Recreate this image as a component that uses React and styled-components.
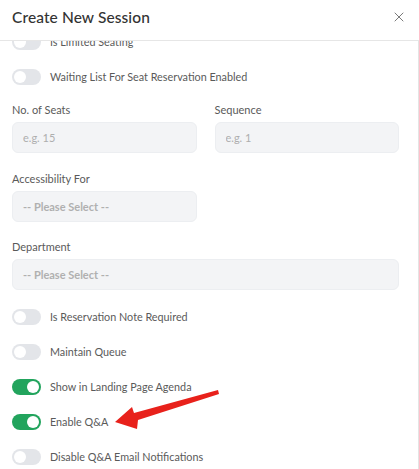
import React, { useLayoutEffect, useRef } from 'react';
import styled, { createGlobalStyle } from 'styled-components';
import { X } from 'lucide-react';

const GlobalStyle = createGlobalStyle`
  html, body {
    margin: 0;
    padding: 0;
    background: #fff;
  }
  body {
    font-family: Lato, "Noto Sans", sans-serif;
    color: #555;
  }
  * { box-sizing: border-box; }
`;

const Modal = styled.div`
  position: relative;
  width: 419px;
  height: 469px;
  display: flex;
  flex-direction: column;
  background: #fff;
  overflow: hidden;
`;

const Header = styled.div`
  height: 41px;
  flex: none;
  display: flex;
  align-items: center;
  justify-content: space-between;
  padding: 0 12px 6px 12px;
  border-bottom: 1px solid #e6e6e6;
`;

const Title = styled.h2`
  margin: 0;
  font-size: 15.5px;
  font-weight: 500;
  color: #333;
  letter-spacing: 0.1px;
`;

const CloseButton = styled.button`
  border: none;
  background: none;
  padding: 0;
  display: flex;
  color: #7a7a7a;
  cursor: pointer;
`;

const Body = styled.div`
  flex: 1;
  overflow: hidden;
  padding: 16px 19px 0 12px;
  border-right: 1px solid #e4e4e4;
`;

const SwitchRow = styled.label`
  height: 35px;
  display: flex;
  align-items: center;
  gap: 9px;
  font-size: 10.8px;
  color: #5a5a5a;
`;

const Track = styled.span`
  width: 29px;
  height: 16px;
  border-radius: 8px;
  flex: none;
  display: flex;
  align-items: center;
  padding: 0 2px;
  justify-content: ${p => (p.$on ? 'flex-end' : 'flex-start')};
  background: ${p => (p.$on ? '#22a45d' : '#e3e5e9')};
`;

const Knob = styled.span`
  width: 12px;
  height: 12px;
  border-radius: 50%;
  background: #fff;
`;

const Fields = styled.div`
  display: grid;
  grid-template-columns: 1fr 1fr;
  column-gap: 18px;
  row-gap: 17.5px;
  margin: 8px 0 9px;
`;

const Field = styled.div`
  display: flex;
  flex-direction: column;
  gap: 5px;
  grid-column: ${p => (p.$wide ? '1 / span 2' : 'auto')};
`;

const Label = styled.span`
  font-size: 11px;
  line-height: 15px;
  color: #5a5a5a;
`;

const Input = styled.input`
  height: 31px;
  width: 100%;
  border: 1px solid #eceef1;
  border-radius: 6px;
  background: #f3f4f6;
  padding: 0 10px;
  font-family: inherit;
  font-size: 11px;
  color: #333;
  outline: none;
  &::placeholder { color: #aeaeae; }
`;

const Select = styled.div`
  height: 31px;
  width: 100%;
  border: 1px solid #eceef1;
  border-radius: 6px;
  background: #f3f4f6;
  padding: 0 10px;
  display: flex;
  align-items: center;
  font-size: 11px;
  font-weight: 700;
  color: #b0b0b0;
`;

const Annotation = styled.svg`
  position: absolute;
  left: 0;
  top: 0;
  pointer-events: none;
`;

const Switch = ({ on, children }) => (
  <SwitchRow>
    <Track $on={on}><Knob /></Track>
    {children}
  </SwitchRow>
);

const topSwitches = [
  { label: 'Is Limited Seating', on: false },
  { label: 'Waiting List For Seat Reservation Enabled', on: false },
];

const bottomSwitches = [
  { label: 'Is Reservation Note Required', on: false },
  { label: 'Maintain Queue', on: false },
  { label: 'Show in Landing Page Agenda', on: true },
  { label: 'Enable Q&A', on: true },
  { label: 'Disable Q&A Email Notifications', on: false },
];

export default function App() {
  const bodyRef = useRef(null);

  // the form is scrolled a little, the first switch sits under the header
  useLayoutEffect(() => {
    if (bodyRef.current) bodyRef.current.scrollTop = 33;
  }, []);

  return (
    <Modal>
      <GlobalStyle />
      <Header>
        <Title>Create New Session</Title>
        <CloseButton aria-label="Close"><X size={16} strokeWidth={1.5} /></CloseButton>
      </Header>
      <Body ref={bodyRef}>
        {topSwitches.map(s => <Switch key={s.label} on={s.on}>{s.label}</Switch>)}
        <Fields>
          <Field>
            <Label>No. of Seats</Label>
            <Input placeholder="e.g. 15" />
          </Field>
          <Field>
            <Label>Sequence</Label>
            <Input placeholder="e.g. 1" />
          </Field>
          <Field>
            <Label>Accessibility For</Label>
            <Select>-- Please Select --</Select>
          </Field>
          <div />
          <Field $wide>
            <Label>Department</Label>
            <Select>-- Please Select --</Select>
          </Field>
        </Fields>
        {bottomSwitches.map(s => <Switch key={s.label} on={s.on}>{s.label}</Switch>)}
        <div style={{ height: 40 }} />
      </Body>
      <Annotation width="419" height="469" viewBox="0 0 419 469">
        <polygon
          points="115,422 132,407 134,413 218,390 219,394 138,420 137,429"
          fill="#e8211b"
        />
      </Annotation>
    </Modal>
  );
}
